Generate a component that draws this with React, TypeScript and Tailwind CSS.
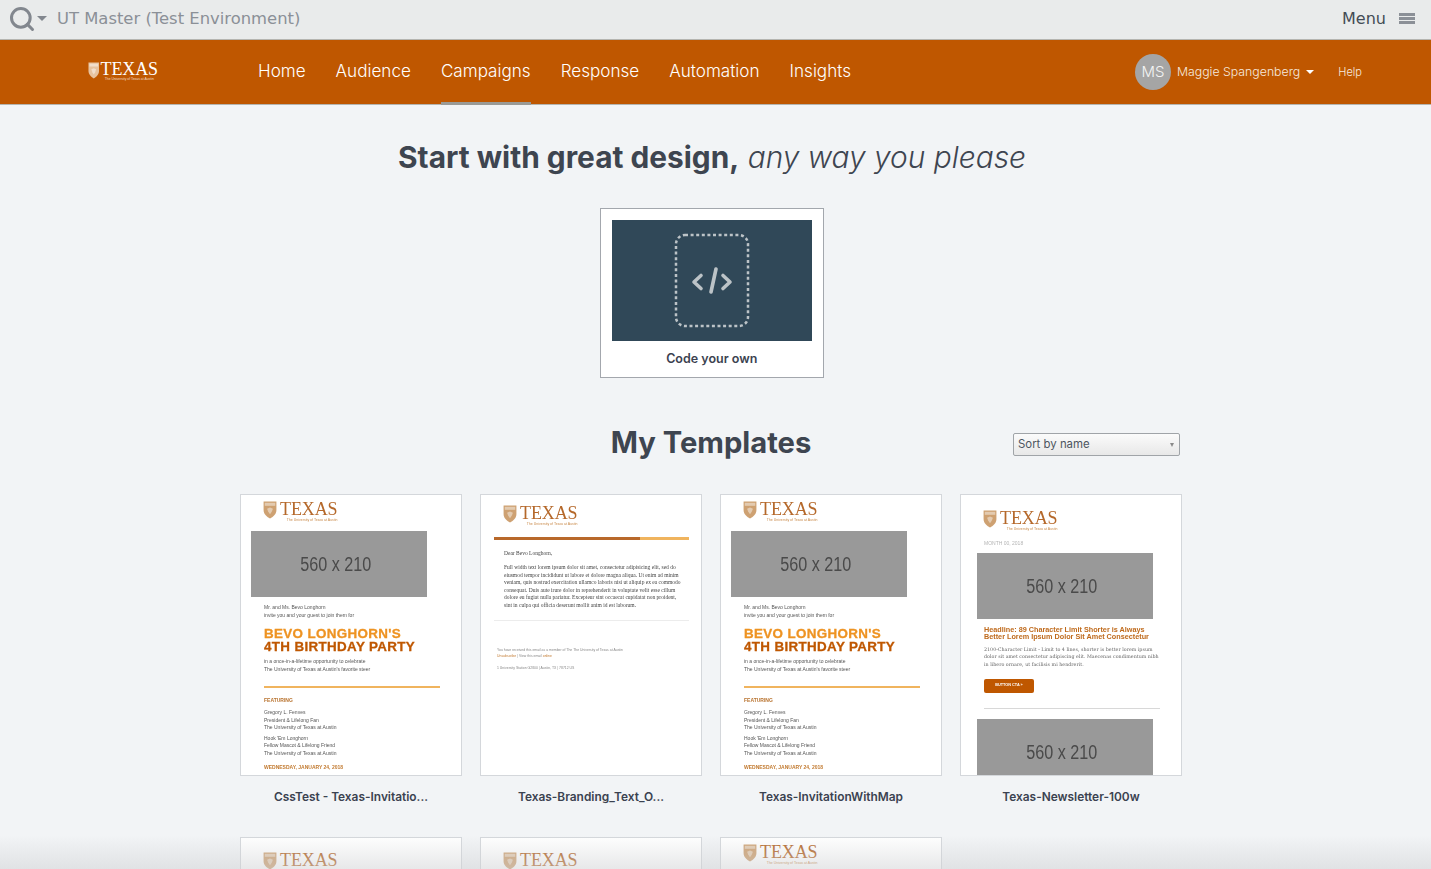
import { Search } from 'lucide-react';

const navItems = ['Home', 'Audience', 'Campaigns', 'Response', 'Automation', 'Insights'];

function Shield({ className, color }: { className: string; color: string }) {
  return (
    <svg viewBox="0 0 24 30" preserveAspectRatio="none" className={className}>
      <path d="M1 1h22v14c0 7-5 11-11 14C6 26 1 22 1 15z" fill={color} />
      <path d="M3 3h18v5H3z" fill="#fff" opacity="0.45" />
      <path d="M12 11l5 2-2 5-3 4-3-4-2-5z" fill="#fff" opacity="0.45" />
    </svg>
  );
}

function MiniLogo({ top }: { top: string }) {
  return (
    <div className={`flex items-start pl-[22px] ${top}`}>
      <Shield className="w-[14px] h-[18px] opacity-80" color="#c28a4f" />
      <div className="ml-[3px] flex flex-col items-end">
        <span className="font-['Liberation_Serif',serif] text-[18px] leading-[17px] tracking-[-0.1px] text-[#b5682a]">TEXAS</span>
        <span className="font-['Liberation_Sans',sans-serif] text-[3.5px] leading-[5px] text-[#c98a4a]">The University of Texas at Austin</span>
      </div>
    </div>
  );
}

function Placeholder({ className }: { className: string }) {
  return (
    <div className={`flex items-center justify-center bg-[#999999] font-['Liberation_Sans',sans-serif] text-[19.5px] text-[#4a4a4a] pr-[6px] pt-[2px] ${className}`}>
      <span className="scale-x-[0.83]">560 x 210</span>
    </div>
  );
}

function Tiny({ children, className = '' }: { children: React.ReactNode; className?: string }) {
  return <div className={`font-['Liberation_Sans',sans-serif] text-[5px] leading-[7.5px] text-[#555] whitespace-nowrap ${className}`}>{children}</div>;
}

function Invitation({ logoTop }: { logoTop: string }) {
  return (
    <div className="blur-[0.4px]">
      <MiniLogo top={logoTop} />
      <Placeholder className="ml-[10px] mt-[8px] w-[176px] h-[66px]" />
      <div className="pl-[23px] mt-[7px]">
        <Tiny>Mr. and Ms. Bevo Longhorn</Tiny>
        <Tiny>invite you and your guest to join them for</Tiny>
        <div className="mt-[9px] font-['Liberation_Sans',sans-serif] font-bold text-[13.4px] leading-[12.5px] tracking-[0.35px] whitespace-nowrap [-webkit-text-stroke:0.3px]">
          <div className="text-[#ee9322]">BEVO LONGHORN'S</div>
          <div className="text-[#bf5700]">4TH BIRTHDAY PARTY</div>
        </div>
        <div className="mt-[5px]">
          <Tiny>in a once-in-a-lifetime opportunity to celebrate</Tiny>
          <Tiny>The University of Texas at Austin's favorite steer</Tiny>
        </div>
        <div className="mt-[13px] h-[1.5px] w-[176px] bg-[#f0b45e]" />
        <Tiny className="mt-[9px] font-bold !text-[#b8722e]">FEATURING</Tiny>
        <div className="mt-[5px]">
          <Tiny>Gregory L. Fenves</Tiny>
          <Tiny>President &amp; Lifelong Fan</Tiny>
          <Tiny>The University of Texas at Austin</Tiny>
        </div>
        <div className="mt-[3px]">
          <Tiny>Hook 'Em Longhorn</Tiny>
          <Tiny>Fellow Mascot &amp; Lifelong Friend</Tiny>
          <Tiny>The University of Texas at Austin</Tiny>
        </div>
        <Tiny className="mt-[7px] font-bold !text-[#c27a30]">WEDNESDAY, JANUARY 24, 2018</Tiny>
      </div>
    </div>
  );
}

function Branding() {
  return (
    <div className="blur-[0.4px]">
      <MiniLogo top="pt-[10px]" />
      <div className="ml-[13px] mt-[10px] flex h-[2.5px] w-[195px]">
        <div className="w-[146px] bg-[#b8682a]" />
        <div className="flex-1 bg-[#f0b45e]" />
      </div>
      <div className="pl-[23px] pr-[20px] pt-[10px] font-['Liberation_Serif',serif] text-[5.5px] leading-[7.5px] text-[#444]">
        <div>Dear Bevo Longhorn,</div>
        <div className="mt-[7px]">
          Full width text lorem ipsum dolor sit amet, consectetur adipisicing elit, sed do eiusmod tempor incididunt ut labore et dolore magna aliqua. Ut enim ad minim veniam, quis nostrud exercitation ullamco laboris nisi ut aliquip ex ea commodo consequat. Duis aute irure dolor in reprehenderit in voluptate velit esse cillum dolore eu fugiat nulla pariatur. Excepteur sint occaecat cupidatat non proident, sint in culpa qui officia deserunt mollit anim id est laborum.
        </div>
      </div>
      <div className="ml-[13px] mt-[11px] h-px w-[195px] bg-[#ececec]" />
      <div className="pl-[16px] mt-[26px] font-['Liberation_Sans',sans-serif] text-[3.45px] leading-[6px] text-[#888]">
        <div>You have received this email as a member of The The University of Texas at Austin</div>
        <div><span className="text-[#c27a30]">Unsubscribe</span> | View this email <span className="text-[#c27a30]">online</span></div>
        <div className="mt-[6px]">1 University Station G2800 | Austin, TX | 78712 US</div>
      </div>
    </div>
  );
}

function Newsletter() {
  return (
    <div className="blur-[0.4px]">
      <MiniLogo top="pt-[15px]" />
      <Tiny className="pl-[23px] mt-[8px] !text-[#b5b5b5]">MONTH 00, 2018</Tiny>
      <Placeholder className="ml-[16px] mt-[5px] w-[176px] h-[66px]" />
      <div className="pl-[23px] pr-[20px] mt-[7px]">
        <div className="font-['Liberation_Sans',sans-serif] font-bold text-[7.25px] leading-[7.5px] whitespace-nowrap text-[#bf6a1c]">
          Headline: 89 Character Limit Shorter is Always<br />Better Lorem Ipsum Dolor Sit Amet Consectetur
        </div>
        <div className="mt-[5px] font-['DejaVu_Serif',serif] text-[4.8px] leading-[7.5px] text-[#666]">
          2100-Character Limit - Limit to 4 lines, shorter is better lorem ipsum dolor sit amet consectetur adipiscing elit. Maecenas condimentum nibh in libero ornare, ut facilisis mi hendrerit.
        </div>
        <div className="mt-[11px] flex h-[14px] w-[50px] items-center justify-center rounded-[2px] bg-[#bf5700] font-['Liberation_Sans',sans-serif] text-[3.8px] font-bold text-white">BUTTON CTA »</div>
      </div>
      <div className="ml-[23px] mt-[15px] h-px w-[176px] bg-[#d8d8d8]" />
      <Placeholder className="ml-[16px] mt-[10px] w-[176px] h-[66px]" />
    </div>
  );
}

function TemplateCard({ name, children }: { name: string; children: React.ReactNode }) {
  return (
    <div>
      <div className="h-[282px] overflow-hidden border border-[#d4d7db] bg-white">{children}</div>
      <div className="mt-[12px] h-[17px] text-center text-[11.9px] font-semibold leading-[17px] text-[#3b4250]">{name}</div>
    </div>
  );
}

export default function App() {
  return (
    <div className="relative h-[869px] overflow-hidden bg-[#f2f4f6] font-['Inter',sans-serif]">
      {/* top bar */}
      <div className="flex h-[39px] items-center justify-between bg-[#e9ebeb] pl-[8px] pr-[16px] font-['DejaVu_Sans',sans-serif]">
        <div className="flex items-center">
          <Search className="-mt-[2px] h-[28px] w-[28px] text-[#82878e]" strokeWidth={2.6} />
          <span className="ml-[1px] -mt-[3px] h-0 w-0 border-x-[5px] border-t-[5px] border-x-transparent border-t-[#82878e]" />
          <span className="ml-[10px] -mt-[1px] text-[16.4px] text-[#8b9097]">UT Master (Test Environment)</span>
        </div>
        <div className="flex items-center">
          <span className="-mt-[2px] text-[16px] text-[#444b55]">Menu</span>
          <div className="ml-[13px] -mt-[2px] flex w-[16px] flex-col gap-[1.5px]">
            <div className="h-[2.5px] bg-[#8b9097]" />
            <div className="h-[2.5px] bg-[#8b9097]" />
            <div className="h-[2.5px] bg-[#8b9097]" />
          </div>
        </div>
      </div>

      {/* orange nav */}
      <div className="flex h-[66px] items-center justify-between border-y border-y-[#b5b5b0] bg-[#bf5700] pl-[88px] pr-[69px] text-white">
        <div className="flex items-center">
          <div className="flex w-[70px] items-start">
            <Shield className="h-[17px] w-[13px]" color="#e7c3a0" />
            <div className="ml-[1px] flex flex-col items-center">
              <span className="font-['Liberation_Serif',serif] text-[18px] leading-[15px] tracking-[-0.1px]">TEXAS</span>
              <span className="font-['Liberation_Sans',sans-serif] text-[3.4px] leading-[5px] text-[#f3dcc8]">The University of Texas at Austin</span>
            </div>
          </div>
          <nav className="ml-[100px] -mt-[2px] flex gap-[30px] text-[17.1px] font-light">
            {navItems.map((item) => (
              <a key={item} className="relative">
                {item}
                {item === 'Campaigns' && <span className="absolute inset-x-0 top-[44px] h-[3px] bg-[#9a9a96]" />}
              </a>
            ))}
          </nav>
        </div>
        <div className="flex items-center">
          <div className="flex h-[36px] w-[36px] items-center justify-center rounded-full bg-[#a5a5a5] text-[15px] font-light text-[#f4f4f4]">MS</div>
          <span className="ml-[6px] text-[12.3px] font-light text-[#f6e9df]">Maggie Spangenberg</span>
          <span className="ml-[6px] h-0 w-0 border-x-[4px] border-t-[4px] border-x-transparent border-t-white" />
          <span className="ml-[24px] text-[11px] font-light text-[#f6e9df]">Help</span>
        </div>
      </div>

      {/* content */}
      <div className="ml-[240px] w-[942px]">
        <h1 className="mt-[32px] pl-[2px] text-center text-[29.85px] leading-[40px] text-[#3e4550]">
          <span className="font-bold">Start with great design,</span> <span className="font-light italic">any way you please</span>
        </h1>

        <div className="ml-[360px] mt-[31px] h-[170px] w-[224px] border border-[#a3a7ad] bg-white pl-[10.5px] pr-[11px] pt-[11px]">
          <div className="flex h-[121px] items-center justify-center bg-[#304858]">
            <svg viewBox="0 0 78 98" className="h-[98px] w-[78px]" fill="none" stroke="#bcc3c7">
              <rect x="3" y="3" width="72" height="91" rx="9" strokeWidth="2.5" strokeDasharray="3 2.6" />
              <path d="M28 43.5l-7 6.5 7 6.5M50 43.5l7 6.5-7 6.5" strokeWidth="3.6" strokeLinecap="round" strokeLinejoin="round" />
              <path d="M43 37l-5 23" strokeWidth="3.6" strokeLinecap="round" />
            </svg>
          </div>
          <div className="mt-[9px] text-center text-[12.5px] font-semibold text-[#3b4250]">Code your own</div>
        </div>

        <div className="relative mt-[45px] h-[40px]">
          <h2 className="text-center text-[29.2px] font-bold leading-[40px] text-[#3e4550]">My Templates</h2>
          <div className="absolute left-[773px] top-[10px] flex h-[23px] w-[167px] items-center justify-between rounded-[2px] border border-[#a0a4a8] bg-gradient-to-b from-[#fbfbfb] to-[#e8e8e8] pl-[4px] pr-[5px] text-[11.4px] text-[#4d5560]">
            Sort by name
            <span className="h-0 w-0 border-x-[2px] border-t-[4px] border-x-transparent border-t-[#8a8a8a]" />
          </div>
        </div>

        <div className="mt-[31px] grid grid-cols-4 gap-x-[18px] gap-y-[32px]">
          <TemplateCard name="CssTest - Texas-Invitatio..."><Invitation logoTop="pt-[6px]" /></TemplateCard>
          <TemplateCard name="Texas-Branding_Text_O..."><Branding /></TemplateCard>
          <TemplateCard name="Texas-InvitationWithMap"><Invitation logoTop="pt-[6px]" /></TemplateCard>
          <TemplateCard name="Texas-Newsletter-100w"><Newsletter /></TemplateCard>
          <TemplateCard name=""><MiniLogo top="pt-[14px]" /></TemplateCard>
          <TemplateCard name=""><MiniLogo top="pt-[14px]" /></TemplateCard>
          <TemplateCard name=""><MiniLogo top="pt-[6px]" /></TemplateCard>
        </div>
      </div>

      {/* bottom fade */}
      <div className="pointer-events-none absolute inset-x-0 bottom-0 h-[34px] bg-gradient-to-b from-transparent to-[#cfd1d3]/50" />
    </div>
  );
}
